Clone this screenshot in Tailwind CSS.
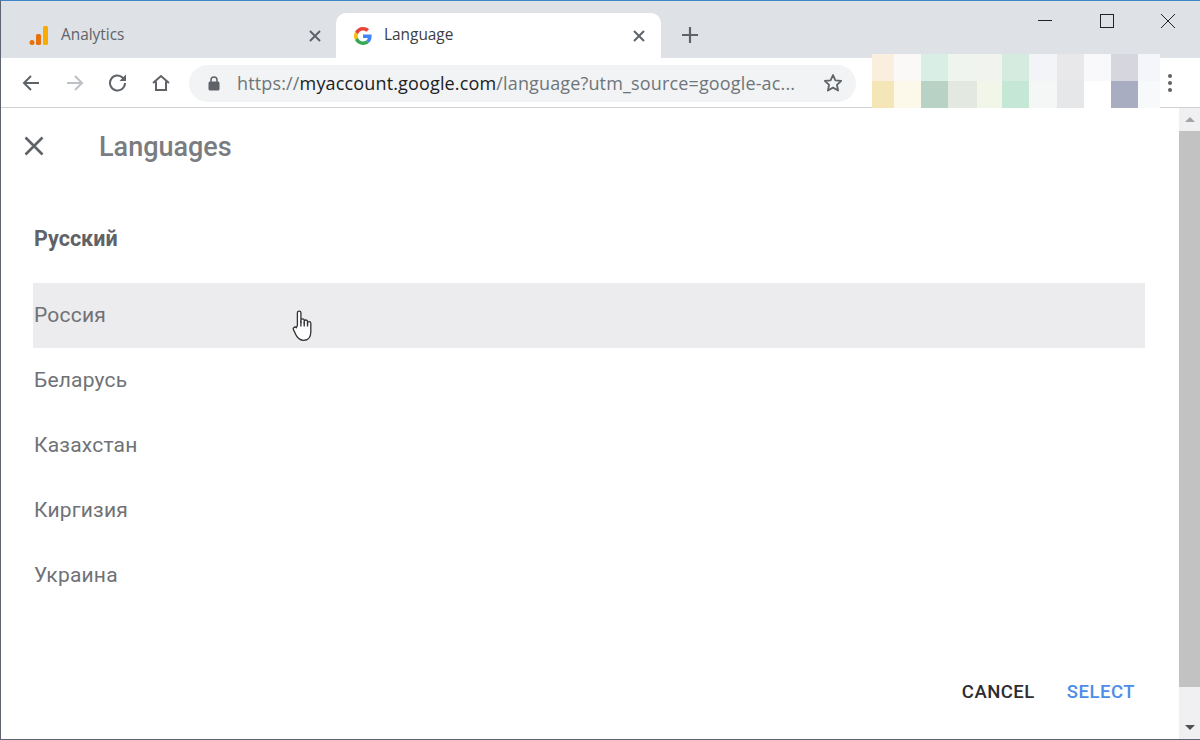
<!DOCTYPE html>
<html lang="en">
<head>
<meta charset="UTF-8">
<title>Language</title>
<script src="https://cdn.jsdelivr.net/npm/@tailwindcss/browser@4"></script>
</head>
<body class="bg-white overflow-hidden">
<div class="relative w-[1200px] h-[740px] flex flex-col border-t border-t-[#3d86c6] border-l border-l-[#5f6472] border-b border-b-[#5f6472] font-['Roboto',sans-serif]">

  <!-- tab strip -->
  <div class="h-[57px] shrink-0 bg-[#dee1e6] flex items-end pl-[15px] relative">
    <div class="w-[320px] h-[45px] flex items-center pl-[13px] pr-[14px]">
      <svg width="20" height="20" viewBox="0 0 20 20" class="shrink-0">
        <circle cx="3" cy="16.500" r="2.500" fill="#e8710a"/>
        <rect x="7" y="8" width="5" height="11" rx="1.500" fill="#e8710a"/>
        <rect x="14" y="0" width="5" height="19" rx="1.500" fill="#f9ab00"/>
      </svg>
      <span class="ml-[12px] mb-[2px] text-[15.400px] text-[#5f6368] font-['Open_Sans',sans-serif] flex-1">Analytics</span>
      <svg width="14" height="14" viewBox="0 0 14 14" fill="none" stroke="#5f6368" stroke-width="2"><path d="M2 2l10 10M12 2L2 12"/></svg>
    </div>
    <div class="w-[325px] h-[45px] bg-white rounded-t-[10px] flex items-center pl-[18px] pr-[15px]">
      <svg width="18" height="18" viewBox="0 0 48 48" class="shrink-0">
        <path fill="#EA4335" d="M24 9.500c3.500 0 6.700 1.300 9.200 3.400l6.900-6.900C35.900 2.400 30.300 0 24 0 14.600 0 6.500 5.400 2.600 13.200l8 6.200C12.500 13.700 17.800 9.500 24 9.500z"/>
        <path fill="#4285F4" d="M47 24.500c0-1.600-.2-3.200-.4-4.500H24v9h13c-.6 3-2.300 5.500-4.800 7.200l7.700 6C44.400 37.900 47 31.800 47 24.500z"/>
        <path fill="#FBBC05" d="M10.600 28.600c-.5-1.400-.8-3-.8-4.600s.3-3.200.8-4.600l-8-6.200C.9 16.500 0 20.100 0 24s.9 7.500 2.600 10.800l8-6.200z"/>
        <path fill="#34A853" d="M24 48c6.500 0 11.900-2.100 15.900-5.800l-7.700-6c-2.200 1.500-4.900 2.300-8.200 2.300-6.200 0-11.500-4.200-13.400-9.900l-8 6.200C6.500 42.600 14.600 48 24 48z"/>
      </svg>
      <span class="ml-[12px] mb-[2px] text-[15.400px] text-[#3c4043] font-['Open_Sans',sans-serif] flex-1">Language</span>
      <svg width="14" height="14" viewBox="0 0 14 14" fill="none" stroke="#5f6368" stroke-width="2"><path d="M2 2l10 10M12 2L2 12"/></svg>
    </div>
    <svg class="ml-[20px] mb-[14px]" width="18" height="18" viewBox="0 0 18 18" fill="none" stroke="#5f6368" stroke-width="2.200"><path d="M9 1v16M1 9h16"/></svg>
    <!-- window buttons -->
    <div class="absolute top-[13px] right-0 flex items-center">
      <svg class="mr-[48px]" width="14" height="14" viewBox="0 0 14 14" fill="none" stroke="#222" stroke-width="1"><path d="M0 6.500h14"/></svg>
      <svg class="mr-[47px]" width="14" height="14" viewBox="0 0 14 14" fill="none" stroke="#222" stroke-width="1"><rect x=".5" y=".5" width="13" height="13"/></svg>
      <svg class="mr-[25px]" width="14" height="14" viewBox="0 0 14 14" fill="none" stroke="#222" stroke-width="1"><path d="M0 0l14 14M14 0L0 14"/></svg>
    </div>
  </div>

  <!-- toolbar -->
  <div class="h-[50px] shrink-0 bg-white border-b border-b-[#cfd1d4] flex items-center pl-[21px] pt-[1px] relative">
    <svg width="18" height="18" viewBox="0 0 18 18" fill="none" stroke="#5f6368" stroke-width="2"><path d="M17 9H2M9 2L2 9l7 7"/></svg>
    <svg class="ml-[26px]" width="18" height="18" viewBox="0 0 18 18" fill="none" stroke="#bdc1c6" stroke-width="2"><path d="M1 9h15M9 2l7 7-7 7"/></svg>
    <svg class="ml-[24px]" width="20" height="20" viewBox="0 0 20 20" fill="none" stroke="#5f6368" stroke-width="2"><path d="M17 10a7.500 7.500 0 1 1-2.200-5.300L17 7"/><path d="M18 1.500V8h-6.500z" fill="#5f6368" stroke="none"/></svg>
    <svg class="ml-[24px]" width="18" height="18" viewBox="0 0 18 18" fill="none" stroke="#5f6368" stroke-width="2"><path d="M1 9l8-7 8 7M4 7.500V16h10V7.500"/></svg>
    <div class="ml-[19px] w-[667px] h-[37px] bg-[#f1f3f4] rounded-full flex items-center pl-[19px] pr-[13px]">
      <svg width="12" height="15" viewBox="0 0 12 15" class="shrink-0"><path fill="none" stroke="#5f6368" stroke-width="1.500" d="M3 6V4a3 3 0 0 1 6 0v2"/><rect x="0.500" y="5.500" width="11" height="9" rx="1.500" fill="#5f6368"/></svg>
      <span class="ml-[17px] text-[18px] tracking-[0.15px] whitespace-nowrap font-['Open_Sans',sans-serif] flex-1 text-[#70757a]">https://<span class="text-[#202124]">myaccount.google.com</span>/language?utm_source=google-ac...</span>
      <svg width="20" height="20" viewBox="0 0 20 20" fill="none" stroke="#5f6368" stroke-width="1.800" stroke-linejoin="round" class="shrink-0"><path d="M10 2l2.400 5.300 5.800.6-4.300 3.900 1.200 5.700-5.100-2.900-5.100 2.900 1.200-5.700L1.800 7.900l5.800-.6z"/></svg>
    </div>
    <div class="absolute left-[1167px] top-[16px] flex flex-col gap-[3px]">
      <span class="w-[4px] h-[4px] rounded-full bg-[#5f6368]"></span>
      <span class="w-[4px] h-[4px] rounded-full bg-[#5f6368]"></span>
      <span class="w-[4px] h-[4px] rounded-full bg-[#5f6368]"></span>
    </div>
  </div>

  <!-- blurred out extensions -->
  <div class="absolute left-[871px] top-[53px] h-[54px] flex">
    <div class="w-[22px] flex flex-col"><div class="h-[27px] bg-[#faefdf]"></div><div class="flex-1 bg-[#f4e6b6]"></div></div>
    <div class="w-[27px] flex flex-col"><div class="h-[27px] bg-[#faf9f7]"></div><div class="flex-1 bg-[#fdf9ea]"></div></div>
    <div class="w-[27px] flex flex-col"><div class="h-[27px] bg-[#d9eee4]"></div><div class="flex-1 bg-[#b9d2c6]"></div></div>
    <div class="w-[29px] flex flex-col"><div class="h-[27px] bg-[#f0f4ef]"></div><div class="flex-1 bg-[#e3e8e1]"></div></div>
    <div class="w-[25px] flex flex-col"><div class="h-[27px] bg-[#f1f3ee]"></div><div class="flex-1 bg-[#f2f6e9]"></div></div>
    <div class="w-[27px] flex flex-col"><div class="h-[27px] bg-[#d5ebdf]"></div><div class="flex-1 bg-[#c4e8d5]"></div></div>
    <div class="w-[28px] flex flex-col"><div class="h-[27px] bg-[#f3f4f7]"></div><div class="flex-1 bg-[#f5f6f6]"></div></div>
    <div class="w-[27px] flex flex-col"><div class="h-[27px] bg-[#e8e8ea]"></div><div class="flex-1 bg-[#e6e7e8]"></div></div>
    <div class="w-[27px] flex flex-col"><div class="h-[27px] bg-[#f9f9fc]"></div><div class="flex-1 bg-white"></div></div>
    <div class="w-[27px] flex flex-col"><div class="h-[27px] bg-[#d6d7de]"></div><div class="flex-1 bg-[#a8adc2]"></div></div>
    <div class="w-[22px] flex flex-col"><div class="h-[27px] bg-[#f5f6f9]"></div><div class="flex-1 bg-[#f8f9fb]"></div></div>
  </div>

  <!-- page -->
  <div class="flex-1 flex min-h-0">
    <div class="flex-1 flex flex-col pl-[32px] pr-[34px] relative">
      <div class="h-[78px] shrink-0 flex items-center ml-[-9px]">
        <svg class="mb-[2px]" width="20" height="20" viewBox="0 0 20 20" fill="none" stroke="#5f6368" stroke-width="2.600"><path d="M1.500 1.500l17 17M18.500 1.500l-17 17"/></svg>
        <span class="ml-[55px] text-[27px] font-medium text-[#797c80]">Languages</span>
      </div>
      <div class="mt-[41px] h-[24px] flex items-center pl-[1px] text-[21.500px] font-bold text-[#5f6368]">Русский</div>
      <div class="mt-[32px] flex flex-col text-[21px] text-[#6f7276] tracking-[0.2px]">
        <div class="h-[65px] flex items-center pl-[1px] bg-[#ecebed]">Россия</div>
        <div class="h-[65px] flex items-center pl-[1px]">Беларусь</div>
        <div class="h-[65px] flex items-center pl-[1px]">Казахстан</div>
        <div class="h-[65px] flex items-center pl-[1px]">Киргизия</div>
        <div class="h-[66px] flex items-center pl-[1px]">Украина</div>
      </div>
      <div class="mt-auto mb-[32px] flex justify-end items-center text-[18.500px] font-medium tracking-[0.5px] pr-[10px]">
        <span class="text-[#2c2d30]">CANCEL</span>
        <span class="ml-[32px] text-[#4d8de8]">SELECT</span>
      </div>
      <!-- hand cursor -->
      <svg class="absolute left-[290px] top-[201px]" width="26" height="33" viewBox="0 0 22 30" fill="#fff" stroke="#333" stroke-width="1.200" stroke-linejoin="round">
        <path d="M5 15V3.500a1.600 1.600 0 0 1 3.200 0V12l0-1.500a1.500 1.500 0 0 1 3 0V13l0-1.500a1.500 1.500 0 0 1 3 0V14l0-1a1.500 1.500 0 0 1 3 0v8c0 4.500-2.500 7.500-6.500 7.500-3.500 0-5-1.500-6.500-4L1.500 19c-1-1.500 1-3.500 2.500-2z"/>
        <path d="M8.200 11v5M11.200 12v4M14.200 13v3" fill="none"/>
      </svg>
    </div>
    <!-- scrollbar -->
    <div class="w-[21px] shrink-0 bg-[#f0f0f2] flex flex-col">
      <div class="h-[23px] flex items-center justify-center"><div class="w-0 h-0 border-x-[5px] border-x-transparent border-b-[5px] border-b-[#a3a3a3]"></div></div>
      <div class="h-[556px] bg-[#c2c2c2]"></div>
      <div class="mt-auto h-[24px] flex items-center justify-center"><div class="w-0 h-0 border-x-[5px] border-x-transparent border-t-[5px] border-t-[#505050]"></div></div>
    </div>
  </div>
</div>
</body>
</html>
